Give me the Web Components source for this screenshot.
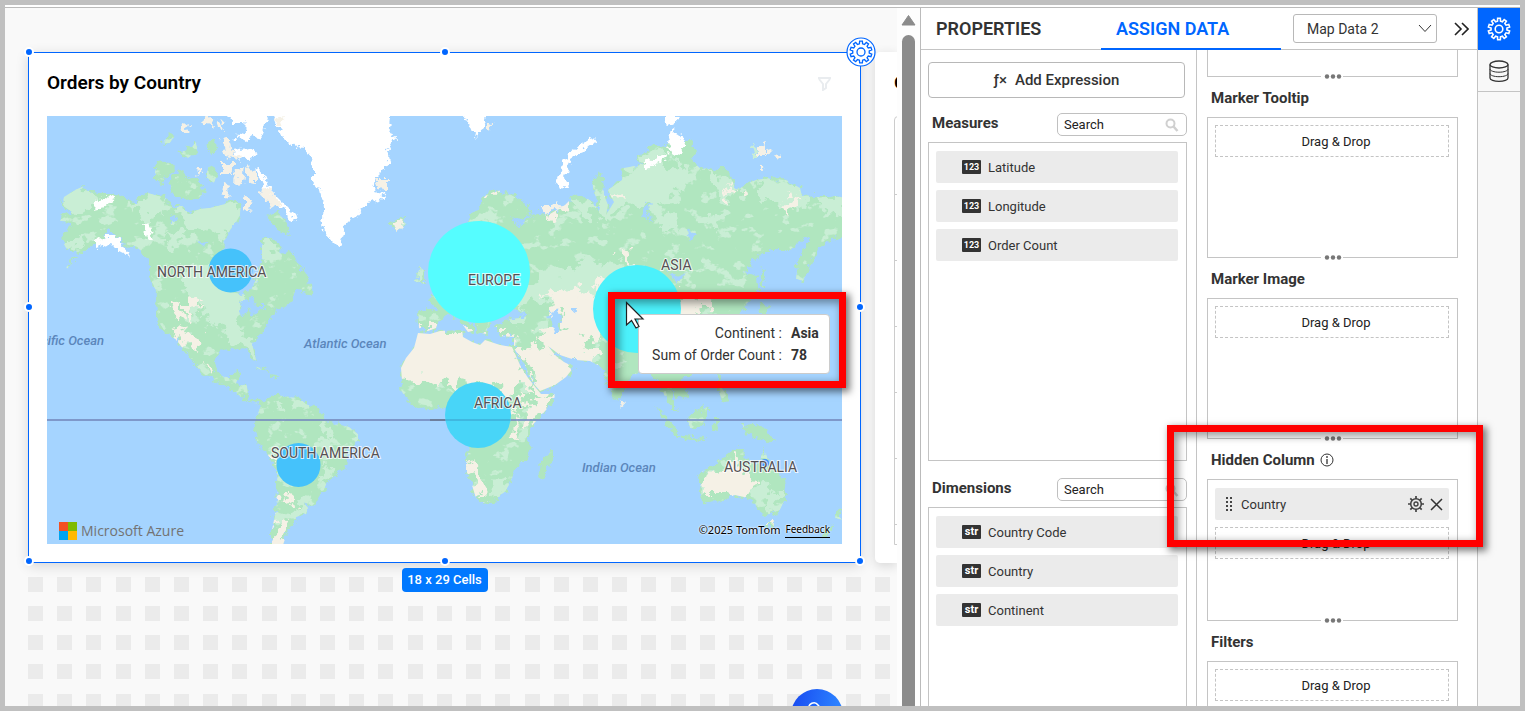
<!DOCTYPE html>
<html lang="en">
<head>
<meta charset="utf-8">
<title>Dashboard Designer</title>
<style>
  body { margin: 0; font-family: Roboto, "Liberation Sans", sans-serif; color: #333; }
</style>
</head>
<body>
<dash-app></dash-app>

<script>
const BASE = `*{box-sizing:border-box} button,input,select{font:inherit;color:inherit;margin:0} button{padding:0;border:0;background:none;cursor:pointer}`;

function gearPath(cx, cy, teeth, outer, inner) {
  const step = Math.PI * 2 / teeth;
  let d = '';
  for (let i = 0; i < teeth; i++) {
    const a = i * step - Math.PI / 2;
    [[-.30, inner], [-.20, outer], [.20, outer], [.30, inner]].forEach(([k, r], j) => {
      const x = cx + Math.cos(a + k * step) * r, y = cy + Math.sin(a + k * step) * r;
      d += (i || j ? 'L' : 'M') + x.toFixed(2) + ' ' + y.toFixed(2);
    });
  }
  return d + 'Z';
}

function define(name, html, setup) {
  const tpl = document.createElement('template');
  tpl.innerHTML = html;
  customElements.define(name, class extends HTMLElement {
    connectedCallback() {
      if (this.shadowRoot) return;
      const root = this.attachShadow({ mode: 'open' });
      root.append(tpl.content.cloneNode(true));
      if (setup) setup(this, root);
    }
  });
}

/* world map with bubbles */
define('world-map', `
<style>${BASE}
  :host{display:block;position:relative;height:428px;background:#a5d4ff}
  svg.map{display:block;width:100%;height:100%}
  .c{font:400 14px Roboto,sans-serif;fill:#555053;stroke:#fff;stroke-opacity:.75;stroke-width:2px;paint-order:stroke}
  .o{font:italic 500 13px Roboto,sans-serif;fill:#5b86bb}
  .logo,.legal{position:absolute;bottom:4px;display:flex;align-items:center}
  .logo{left:12px;gap:4px;font:500 14px/18px "Open Sans","Noto Sans",sans-serif;color:#737373}
  .legal{right:12px;bottom:6px;gap:5px;font:11px/16px "Noto Sans","Open Sans",sans-serif;color:#000;text-shadow:0 0 2px #fff,0 0 2px #fff}
  .legal a{color:#000;text-decoration:none;border-bottom:1px solid #000;font-size:10px}
</style>
<svg class="map" viewBox="47 116 795 428" preserveAspectRatio="xMidYMid slice" role="img" aria-label="World map">
  <defs>
    <filter id="coast" x="47" y="100" width="795" height="460" filterUnits="userSpaceOnUse">
      <feTurbulence type="fractalNoise" baseFrequency=".16" numOctaves="3" seed="4" result="n"/>
      <feDisplacementMap in="SourceGraphic" in2="n" scale="11" xChannelSelector="R" yChannelSelector="G"/>
    </filter>
    <filter id="patch" x="47" y="100" width="795" height="460" filterUnits="userSpaceOnUse">
      <feTurbulence type="fractalNoise" baseFrequency=".07" numOctaves="4" seed="9" result="n"/>
      <feDisplacementMap in="SourceGraphic" in2="n" scale="34" xChannelSelector="R" yChannelSelector="G"/>
    </filter>
    <filter id="speck" x="47" y="100" width="795" height="460" filterUnits="userSpaceOnUse" color-interpolation-filters="sRGB">
      <feTurbulence type="fractalNoise" baseFrequency=".06 .08" numOctaves="4" seed="21"/>
      <feColorMatrix values="0 0 0 0 .788  0 0 0 0 .933  0 0 0 0 .835  14 0 0 0 -8.4"/>
      <feComposite operator="in" in2="SourceAlpha"/>
    </filter>
    <clipPath id="landclip"><use href="#land"/></clipPath>
  </defs>
  <rect x="40" y="110" width="810" height="440" fill="#a5d4ff"/>
  <g filter="url(#coast)">
    <path id="land" fill="#b0e6bf" d="M62 205L64 197 75 190 82 187 92 192 100 193 115 195 125 196 133 203 140 197 148 193 158 196 165 197 172 206 182 206 190 213 200 209 210 208 218 206 225 204 233 200 241 206 240 215 236 222 230 230 226 238 222 250 212 264 214 282 230 292 242 294 250 289 256 280 262 262 262 238 270 238 278 243 282 254 291 250 296 258 298 266 306 272 310 280 306 288 296 293 290 303 278 310 272 316 266 324 265 331 258 338 252 344 254 352 256 360 252 359 248 349 240 348 232 349 222 350 217 355 215 362 217 370 222 376 230 377 233 371 240 370 238 378 236 384 247 385 248 393 245 398 250 401 258 399 264 401 262 405 252 403 243 400 238 394 230 389 220 383 210 379 201 374 197 366 190 358 184 350 178 342 172 336 165 332 160 324 157 314 156 300 157 293 152 283 150 270 147 260 140 250 133 245 127 246 118 237 108 230 100 240 92 246 80 255 67 269 66 267 75 258 84 252 76 252 66 248 61 238 70 228 72 222 60 221 62 214 72 212Z
      M256 418L262 402 268 395 277 394 290 397 300 398 306 404 318 408 323 416 326 422 335 424 348 426 358 434 358 440 350 448 348 458 344 471 338 474 328 480 324 490 318 500 312 506 304 502 308 508 306 514 296 517 294 524 288 530 286 536 282 548 272 548 272 530 276 510 277 485 277 470 268 455 258 445 254 431Z
      M418 333L430 334 440 331 462 330 463 337 472 342 480 345 485 340 500 345 512 347 520 365 528 378 536 388 541 394 555 394 554 400 546 410 537 420 528 430 528 440 531 450 528 458 520 463 514 471 512 480 505 492 496 500 482 503 476 498 472 485 466 470 466 458 470 448 466 440 462 430 456 422 450 410 440 406 430 408 420 409 412 404 404 396 400 388 402 380 401 368 406 358 414 348Z
      M418 310L438 311 432 304 428 296 440 290 455 280 466 268 474 264 482 268 500 262 500 250 488 252 480 262 472 258 466 240 468 222 478 205 485 196 498 190 508 193 520 200 530 208 532 216 520 219 512 216 518 226 530 218 536 213 550 214 565 205 572 198 580 195 590 200 600 210 594 192 592 182 598 172 603 177 604 195 608 205 606 215 614 202 608 190 622 180 624 168 640 165 638 155 650 148 665 145 674 140 690 140 697 150 692 160 700 168 715 170 725 168 730 176 736 190 744 184 756 180 770 178 786 180 800 188 802 196 815 195 830 195 846 198 846 235 835 238 825 245 818 247 812 264 803 281 796 279 797 262 805 246 812 240 806 236 790 250 765 250 755 258 745 272 757 276 758 290 750 300 742 310 741 322 735 318 726 316 735 328 745 342 742 352 735 362 722 369 705 373 690 374 680 382 688 392 684 400 676 396 672 392 672 402 678 412 672 410 666 400 660 384 652 374 640 370 632 378 622 386 622 394 617 401 612 394 605 376 600 366 590 361 575 360 560 355 548 346 556 356 564 362 574 367 566 377 555 385 540 391 534 384 524 365 514 348 514 337 500 336 496 326 504 320 520 318 524 314 512 306 504 308 498 316 490 320 486 334 478 332 474 318 464 312 470 322 476 330 468 332 458 318 446 316 438 322 436 328 428 331 419 328Z
      M698 478L700 472 712 467 718 460 728 455 737 448 746 449 744 458 754 465 760 460 764 446 768 460 776 470 784 480 787 495 780 510 770 515 760 512 752 500 744 497 735 495 722 502 710 504 702 503 701 490Z
      M155 166L160 160 172 164 175 168 168 176 162 184 155 180Z M172 174L180 170 186 178 195 176 200 185 207 192 198 198 186 200 173 195 170 186Z M161 144L168 135 174 137 170 143Z M178 152L186 150 196 142 198 152 188 158Z M207 144L214 140 216 150 210 154Z M207 168L214 164 218 174 214 183 207 178Z
      M268 216L278 212 286 222 290 234 280 232 272 224Z M305 289L310 282 316 294 306 296Z M416 281L417 272 421 268 424 276 424 284Z M552 448L552 458 548 470 542 480 538 477 541 462Z
      M656 408L662 412 668 420 680 434 678 438 668 428Z M680 435L692 437 706 438 704 441 682 439Z M687 418L700 410 707 406 707 418 702 428 690 428Z M714 418L720 418 716 424 718 432 712 430Z M718 374L723 376 722 388 730 400 722 402 718 388Z M742 424L755 425 765 430 776 441 768 441 758 438 746 434Z M837 507L842 512 842 520 835 518Z M834 524L830 532 822 538 824 531Z M762 266L765 276 764 290 760 286Z M768 522L774 522 772 528 768 527Z M760 304L770 306 764 314 758 312Z M390 221L403 217 406 224 398 230 390 229Z M254 366L264 369 270 373 264 372Z M272 374L280 376 272 378Z"/>
  </g>
  <g clip-path="url(#landclip)">
    <use href="#land" filter="url(#speck)"/>
    <g fill="#c9eed5" filter="url(#patch)">
      <path d="M175 210L240 195 240 230 215 238 188 225Z M195 262L218 270 240 294 238 318 225 330 205 322 195 300 180 280Z M60 195L90 185 100 200 75 215Z M66 236L84 244 74 256 62 246Z M130 205L160 196 166 210 140 222Z M160 230L185 232 180 250 168 246Z M262 236L282 242 276 258 266 256Z M225 324L240 320 238 340 228 344Z M250 340L258 344 256 362 250 356Z"/>
      <path d="M290 505L304 498 312 508 304 518 292 516Z M272 410L288 402 284 412Z M320 470L332 466 330 474 322 478Z M320 432L334 424 330 440Z M490 485L508 478 504 488 492 492Z"/>
      <path d="M538 272L600 262 640 270 650 290 560 300 530 300Z M606 178L645 160 690 170 685 190 655 210 620 205 600 220Z M650 205L672 210 676 230 660 226Z M570 198L598 205 590 225 574 215Z M700 168L740 185 730 200 716 186Z M755 176L810 184 806 208 780 206 760 196Z M820 196L848 194 846 220 826 216Z M716 215L726 208 722 238 714 230Z M480 312L520 306 516 322 490 322Z M505 285L540 284 545 300 510 306Z M760 485L784 490 774 508 764 512Z M700 484L708 490 706 504Z"/>
    </g>
    <g fill="#f5f1e6" filter="url(#patch)">
      <path d="M394 330L512 330 520 366 534 388 512 388 500 382 470 388 440 380 394 382Z M516 348L548 342 556 354 578 366 560 384 542 394Z M536 330L575 328 590 350 596 362 566 362 548 344Z M545 296L600 290 625 310 620 336 580 340 560 320Z M640 298L700 292 710 312 670 320 640 316Z M530 395L562 392 545 412 525 424Z M465 458L476 468 488 494 478 504Z M512 402L520 430 514 438Z"/>
      <path d="M702 475L735 462 752 478 760 492 745 502 722 492 704 492Z M170 304L184 302 186 318 174 320Z M172 330L190 326 206 346 196 352 180 340Z M190 296L200 300 196 318 190 314Z M272 522L284 516 290 528 286 548 270 548Z M262 440L270 456 276 466 264 456Z M284 490L292 500 286 504Z M205 364L212 366 210 374Z M545 205L562 200 566 212 552 216Z M610 250L632 258 628 266Z M612 192L624 190 622 202Z M728 186L738 190 734 202Z M780 204L800 194 792 216Z M484 194L500 188 494 200Z M584 300L600 280 606 296Z"/>
    </g>
    <g fill="#a5d4ff" filter="url(#coast)">
      <path d="M549 312L558 308 562 318 558 326 562 332 554 332 550 322Z M570 308L576 308 574 314Z M500 312L512 307 526 312 524 318 506 318Z M240 302L252 298 256 306 266 306 254 316 248 310 242 316Z M668 272L680 276 688 272 676 282Z M196 242L208 240 204 246Z M170 216L178 218 172 222Z M640 215L648 202 650 220Z M488 230L496 226 494 262 486 258Z M688 230L696 234 690 240Z"/>
    </g>
  </g>
  <g fill="#fff" filter="url(#coast)">
    <path d="M272 112L276 122 282 136 290 144 302 147 308 154 313 166 313 182 320 192 323 204 322 218 325 232 332 242 338 248 342 237 347 222 356 217 364 208 368 203 380 200 385 193 374 190 376 176 384 168 390 160 387 150 394 138 390 128 392 112Z"/>
    <path d="M228 112L270 112 265 124 262 138 252 136 244 142 236 138 248 128 242 122 232 122Z M232 150L250 148 258 154 248 159 234 158Z M256 168L264 174 270 190 284 204 294 214 296 222 288 216 278 206 266 198 262 184Z"/>
    <path d="M464 112L486 112 482 128 477 139 472 132Z M560 188L556 180 562 165 568 155 580 145 592 137 596 142 585 149 572 158 567 168 565 178 570 189Z M664 114L678 114 677 122 668 126Z M672 130L680 134 685 148 674 156 668 147Z M642 163L668 152 666 158 648 169Z M96 202L106 197 116 199 104 207 94 209Z M143 224L150 226 153 240 146 238Z M98 240L104 236 116 236 126 248 130 256 118 250 110 244 98 248Z"/>
  </g>
  <g fill="#f5f1e6" filter="url(#coast)">
    <path d="M274 118L286 116 280 126Z M203 117L212 116 214 126 206 124Z M216 118L222 122 224 130 218 128Z M181 126L190 124 188 132 182 132Z M222 137L230 142 232 154 242 156 238 160 226 156Z M222 164L234 164 232 174 222 174Z M236 170L244 166 242 186 234 184Z M246 168L256 170 256 184 248 182Z M222 182L230 184 228 198 220 194Z M264 186L276 196 282 208 270 204 260 192Z M244 196L252 200 250 212 244 208Z M196 168L202 168 198 178Z M376 180L388 180 388 190 378 188Z M394 222L404 220 400 230 392 228Z M487 122L493 124 492 132 487 130Z M758 148L764 144 764 156 758 156Z M766 148L772 152 766 154Z M774 154L782 156 778 160Z M760 164L766 168 760 170Z M620 400L625 404 622 408Z M768 522L774 522 772 526Z M540 206L552 206 558 200 562 206 546 214Z"/>
  </g>
  <g fill="#c9eed5" filter="url(#coast)"><path d="M752 148L757 144 758 156 753 156Z M416 281L418 272 422 268 421 282Z M640 156L662 148 666 152 642 164Z"/></g>
  <path d="M47 420H842" stroke="#7488bd" stroke-opacity=".8" stroke-width="2"/>
  <path d="M430 420H456" stroke="#6d7f9d" stroke-width="2"/>
  <g>
    <circle cx="230.500" cy="270.500" r="22" fill="#45c2fb"/>
    <circle cx="298.500" cy="465" r="22" fill="#45c2fb"/>
    <circle cx="479" cy="272" r="51" fill="#55fdff"/>
    <circle cx="478" cy="415" r="33" fill="#48d5f8"/>
    <circle cx="637" cy="309" r="44" fill="#4cf1fb"/>
    <circle cx="765" cy="463" r="4" fill="#4596fb"/>
    <path d="M446 420H510" stroke="#40b8e0" stroke-width="2"/>
  </g>
  <g class="c">
    <text x="157" y="277">NORTH AMERICA</text><text x="468" y="285">EUROPE</text><text x="661" y="270">ASIA</text>
    <text x="474" y="408">AFRICA</text><text x="271" y="458">SOUTH AMERICA</text><text x="724" y="472">AUSTRALIA</text>
  </g>
  <g class="o">
    <text x="104" y="345" text-anchor="end">Pacific Ocean</text><text x="304" y="348">Atlantic Ocean</text><text x="582" y="472">Indian Ocean</text>
  </g>
</svg>
<div class="logo">
  <svg width="18" height="18" viewBox="0 0 18 18"><path fill="#f25022" d="M0 0h9v9H0z"/><path fill="#7fba00" d="M9 0h9v9H9z"/><path fill="#00a4ef" d="M0 9h9v9H0z"/><path fill="#ffb900" d="M9 9h9v9H9z"/></svg>
  <span>Microsoft Azure</span>
</div>
<div class="legal"><span>©2025 TomTom</span><a href="#feedback">Feedback</a></div>
<slot></slot>`);

/* tooltip over the map, with the pointer */
define('map-tooltip', `
<style>${BASE}
  :host{position:absolute;right:12px;top:198px;width:192px;height:60px;background:#fff;border:1px solid #ccc;border-radius:4px;padding:7px 0 0 9px;font-size:14px;line-height:22px}
  dl{margin:0;display:grid;grid-template-columns:134px 1fr;column-gap:9px}
  dt{text-align:right} dd{margin:0;font-weight:700}
  svg{position:absolute;left:-14px;top:-14px}
</style>
<dl><dt>Continent :</dt><dd>Asia</dd><dt>Sum of Order Count :</dt><dd>78</dd></dl>
<svg width="20" height="30" viewBox="0 0 20 30"><path d="M1.500 1.500V24l5-4.500 4.500 7.500 3-1.500-4-7.500h8z" fill="#fff" stroke="#222" stroke-width="1.200"/></svg>`);

define('callout-box', `
<style>
  :host{position:absolute;z-index:5;border:7px solid #f00;box-shadow:3px 3px 7px 1px rgba(0,0,0,.5),inset 3px 3px 8px 1px rgba(0,0,0,.4);pointer-events:none;box-sizing:border-box}
</style>`);

/* selected dashboard widget */
define('widget-card', `
<style>${BASE}
  :host{display:block;position:relative;flex:1;min-width:0;background:#fff;border:1px solid #06f;padding:0 18px 18px;box-shadow:0 3px 12px rgba(0,0,0,.14)}
  header{height:63px;display:flex;align-items:center;justify-content:space-between;padding:0 10px 3px 0}
  h2{margin:0;font-size:19px;line-height:24px;font-weight:600;color:#000}
  i{position:absolute;width:10px;height:10px;margin-top:-1px;border-radius:50%;border:2px solid #fff;background:#06f;transform:translate(-50%,-50%)}
  .gear{position:absolute;right:-16px;top:-16px;width:30px;height:30px}
  output{position:absolute;left:50%;top:calc(100% + 6px);transform:translateX(-50%);background:#0078ff;color:#fff;border-radius:4px;width:86px;font-size:13px;line-height:24px;font-weight:500;text-align:center;white-space:nowrap}
</style>
<header><h2><slot name="title"></slot></h2>
<svg width="15" height="15" viewBox="0 0 15 15" fill="none" stroke="#e9ecef" stroke-width="2"><path d="M1 2h13M2 3l4 5v6l3-2V8l4-5"/></svg></header>
<slot></slot>
<i style="left:0;top:0"></i><i style="left:50%;top:0"></i><i style="left:0;top:50%"></i><i style="left:100%;top:50%"></i>
<i style="left:0;top:100%"></i><i style="left:50%;top:100%"></i><i style="left:100%;top:100%"></i>
<button class="gear" aria-label="Widget settings"><svg width="30" height="30" viewBox="0 0 30 30" fill="none" stroke="#06f"><circle cx="15" cy="15" r="14" fill="#fff" stroke-width="1.200"/><path d="${gearPath(15, 15, 10, 11, 8.3)}" stroke-width="1.300"/><circle cx="15" cy="15" r="4" stroke-width="1.300"/></svg></button>
<output>18 x 29 Cells</output>`);

/* neighbouring widget, cut by the canvas edge */
define('table-card', `
<style>${BASE}
  :host{display:block;flex:0 0 22px;background:#fff;border-radius:5px 0 0 5px;padding:0 0 18px 19px;overflow:hidden;box-shadow:0 3px 12px rgba(0,0,0,.14)}
  h2{margin:0;height:64px;font-size:19px;line-height:61px;font-weight:600;color:#000;white-space:nowrap}
  .rows{width:200px;height:429px;border:1px solid #ccc;border-radius:4px 0 0 0;display:grid;grid-template-rows:78px repeat(5,66px) 1fr}
  .rows div{border-bottom:1px solid #ccc}
</style>
<h2>Orders</h2><div class="rows"><div></div><div></div><div></div><div></div><div></div><div></div></div>`);

/* grid of empty cells behind the widgets */
define('cell-grid', `
<style>:host{position:absolute;inset:43px 0 0 23px;overflow:hidden} svg{display:block;width:100%;height:100%}</style>
<svg shape-rendering="crispEdges" fill="#ebebeb"></svg>`, (host, root) => {
  const pitch = 847 / 29;
  let s = '';
  for (let r = 18; r < 60; r++) for (let c = 0; c < 90; c++)
    s += `<rect x="${Math.round(c * pitch)}" y="${Math.round(r * pitch)}" width="15" height="15"/>`;
  root.querySelector('svg').innerHTML = s;
});

define('design-canvas', `
<style>${BASE}
  :host{display:block;position:relative;flex:1;min-width:0;background:#f9f9f9;overflow:hidden}
  .row{position:relative;display:flex;align-items:stretch;gap:14px;padding:44px 0 0 23px}
  .fab{position:absolute;left:786px;bottom:-35px;width:52px;height:52px;border-radius:50%;background:linear-gradient(100deg,#1748f0,#2b80ff 80%)}
  .fab svg{display:block}
</style>
<cell-grid></cell-grid>
<div class="row"><slot></slot></div>
<button class="fab" aria-label="Assistant"><svg width="52" height="52" viewBox="0 0 52 52" fill="none" stroke="#fff" stroke-width="1.500"><path d="M18 20a5 5 0 0 1 9-4l5 6"/></svg></button>`);

define('canvas-scrollbar', `
<style>:host{display:flex;flex-direction:column;flex:0 0 23px;background:#fdfdfd;padding:6px 4px 0;gap:9px;align-items:center}
  svg{flex:none} div{flex:1;width:13px;border-radius:7px 7px 0 0;background:#8b8b8b}</style>
<svg width="15" height="12" viewBox="0 0 15 12"><path d="M7.500 1.500L14 11H1z" fill="#8b8b8b" stroke="#8b8b8b" stroke-linejoin="round"/></svg><div></div>`);

define('field-chip', `
<style>:host{display:flex;align-items:center;height:32px;padding-left:26px;gap:7px;background:#ebebeb;border-radius:2px;font-size:13px}
  b{width:19px;height:14px;background:#333;color:#fff;border-radius:1px;font-size:9px;line-height:14px;text-align:center}
  b.str{font-size:11px;line-height:13px}</style>
<b></b><span><slot></slot></span>`, (host, root) => {
  const b = root.querySelector('b');
  b.textContent = host.getAttribute('type');
  b.className = b.textContent;
});

define('field-list', `
<style>${BASE}
  :host{display:flex;flex-direction:column}
  .head{display:flex;align-items:flex-start;justify-content:space-between;height:23px;margin-bottom:6px;padding-left:4px}
  label{font-size:15px;font-weight:700;line-height:20px}
  .search{position:relative;width:130px;height:23px}
  input{display:block;width:100%;height:23px;border:1px solid #c0c0c0;border-radius:5px;padding:0 26px 0 6px;background:#fff;font-size:13px;outline:0}
  input::placeholder{color:#222;opacity:1}
  .search svg{position:absolute;right:8px;top:5px}
  .box{flex:1;border:1px solid #c4c4c4;padding:8px 8px 0 7px;display:flex;flex-direction:column;gap:7px}
</style>
<div class="head"><label for="q"></label><div class="search"><input id="q" type="text" placeholder="Search">
<svg width="14" height="14" viewBox="0 0 14 14" fill="none" stroke="#d0d0d0" stroke-width="2"><circle cx="5.500" cy="5.500" r="4"/><path d="M8.500 8.500l4 4.500" stroke-width="2.500"/></svg></div></div>
<div class="box"><slot></slot></div>`, (host, root) => {
  root.querySelector('label').textContent = host.getAttribute('heading');
});

define('drop-well', `
<style>${BASE}
  :host{display:block}
  h3{margin:0;height:40px;padding:2px 0 0 4px;display:flex;align-items:center;gap:5px;font-size:15px;font-weight:700}
  .box{position:relative;height:141px;border:1px solid #c4c4c4;padding:7px 8px 0 7px}
  :host([filled]) .box{height:142px;padding-top:8px}
  :host([cut]) h3,:host([cut]) .drop{display:none}
  :host([cut]) .box{height:27px;border-top:0}
  .drop{height:32px;border:1px dashed #c4c4c4;display:flex;align-items:center;justify-content:center;padding-left:8px;font-size:13px;color:#222}
  .grip{position:absolute;left:50%;bottom:-6px;width:22px;height:11px;margin-left:-12px;background:#fff;display:flex}
  .info{display:none} :host([info]) .info{display:block}
</style>
<h3><span></span><svg class="info" width="14" height="14" viewBox="0 0 14 14" fill="none" stroke="#333"><circle cx="7" cy="7" r="6"/><path d="M7 6v5M7 3v2" stroke-width="1.300"/></svg></h3>
<div class="box"><slot></slot><div class="drop">Drag &amp; Drop</div>
<button class="grip" aria-label="Resize"><svg width="22" height="11" viewBox="0 0 22 11" fill="#777"><circle cx="6" cy="5.500" r="2.200"/><circle cx="12" cy="5.500" r="2.200"/><circle cx="18" cy="5.500" r="2.200"/></svg></button></div>`, (host, root) => {
  root.querySelector('h3 span').textContent = host.getAttribute('heading') || '';
});

define('assigned-field', `
<style>${BASE}
  :host{display:flex;align-items:center;height:32px;margin-bottom:7px;background:#ebebeb;border-radius:2px;padding:0 6px 0 10px;font-size:13px}
  span{flex:1;padding-left:8px} button{display:flex;margin-left:6px}
</style>
<svg width="8" height="14" viewBox="0 0 8 14" fill="#444"><path d="M1 0h2v2H1zM5 0h2v2H5zM1 4h2v2H1zM5 4h2v2H5zM1 8h2v2H1zM5 8h2v2H5zM1 12h2v2H1zM5 12h2v2H5z"/></svg>
<span><slot></slot></span>
<button aria-label="Field settings"><svg width="16" height="16" viewBox="0 0 16 16" fill="none" stroke="#444"><circle cx="8" cy="8" r="5.300" stroke-width="1.600"/><path d="M8 0v3M8 13v3M0 8h3M13 8h3M2.300 2.300l2 2M11.700 11.700l2 2M13.700 2.300l-2 2M4.300 11.700l-2 2" stroke-width="1.700"/><circle cx="8" cy="8" r="2" stroke-width="1.400"/></svg></button>
<button aria-label="Remove field"><svg width="13" height="13" viewBox="0 0 13 13" stroke="#333" stroke-width="1.500"><path d="M1 1l11 11M12 1L1 12"/></svg></button>`);

define('data-panel', `
<style>${BASE}
  :host{flex:0 0 557px;display:flex;flex-direction:column;background:#fff;border-left:1px solid #bbb;min-height:0}
  header{flex:none;height:42px;display:flex;align-items:center;border-bottom:1px solid #c4c4c4}
  .tab{align-self:stretch;width:180px;height:42px;text-align:left;padding:0 0 2px 15px;font-size:18px;font-weight:600;white-space:nowrap}
  .tab.on{color:#06f;border-bottom:2px solid #06f;padding-bottom:0}
  .pick{position:relative;width:144px;margin:0 17px 0 12px}
  select{display:block;appearance:none;width:100%;height:29px;border:1px solid #b8b8b8;border-radius:3px;background:#fff;padding:0 28px 0 13px;font-size:14px;outline:0}
  .pick svg{position:absolute;right:5px;top:10px;pointer-events:none}
  .go{display:flex}
  .cols{flex:1;min-height:0;overflow:hidden;display:grid;grid-template-columns:275px 1fr;grid-template-rows:100%}
  .left{border-right:1px solid #c4c4c4;width:276px;padding:12px 9px 0 7px;display:flex;flex-direction:column;min-height:0}
  .add{flex:none;height:36px;margin:0 2px 15px 0;border:1px solid #b8b8b8;border-radius:4px;font-size:15px;font-weight:500;display:flex;align-items:center;justify-content:center;gap:8px}
  .m{height:348px;margin-bottom:17px;flex:none} .d{flex:1 0 260px}
  .right{padding:0 19px 0 11px;overflow:hidden;min-height:0}
</style>
<header><button class="tab">PROPERTIES</button><button class="tab on">ASSIGN DATA</button>
<div class="pick"><select aria-label="Data source"><option>Map Data 2</option></select><svg width="14" height="9" viewBox="0 0 14 9" fill="none" stroke="#333"><path d="M1 1l6 6.500L13 1"/></svg></div>
<button class="go" aria-label="Collapse panel"><svg width="15" height="14" viewBox="0 0 15 14" fill="none" stroke="#222" stroke-width="1.600"><path d="M1 1l6 6-6 6M8 1l6 6-6 6"/></svg></button></header>
<div class="cols">
  <div class="left">
    <button class="add"><span>ƒ×</span><span>Add Expression</span></button>
    <field-list class="m" heading="Measures"><field-chip type="123">Latitude</field-chip><field-chip type="123">Longitude</field-chip><field-chip type="123">Order Count</field-chip></field-list>
    <field-list class="d" heading="Dimensions"><field-chip type="str">Country Code</field-chip><field-chip type="str">Country</field-chip><field-chip type="str">Continent</field-chip></field-list>
  </div>
  <div class="right">
    <drop-well cut></drop-well>
    <drop-well heading="Marker Tooltip"></drop-well>
    <drop-well heading="Marker Image"></drop-well>
    <drop-well heading="Hidden Column" info filled><assigned-field>Country</assigned-field></drop-well>
    <drop-well heading="Filters"></drop-well>
  </div>
</div>`);

define('side-rail', `
<style>${BASE}
  :host{flex:0 0 43px;background:#f8f8f8;border-left:1px solid #c4c4c4;display:flex;flex-direction:column}
  button{height:42px;display:flex;align-items:center;justify-content:center;border-bottom:1px solid #c4c4c4}
  .on{background:#06f;border-color:#06f}
</style>
<button class="on" aria-label="Settings"><svg width="24" height="24" viewBox="0 0 24 24" fill="none" stroke="#fff" stroke-width="1.600"><path d="${gearPath(12, 12, 10, 10.8, 8)}"/><circle cx="12" cy="12" r="3.800"/></svg></button>
<button aria-label="Data sources"><svg width="20" height="22" viewBox="0 0 20 22" fill="none" stroke="#333" stroke-width="1.300"><ellipse cx="10" cy="4.500" rx="9" ry="3.500"/><path d="M1 4.500v13.500c0 1.800 4 3.300 9 3.300s9-1.500 9-3.300V4.500"/><path d="M1 9c0 1.800 4 3.200 9 3.200S19 10.800 19 9M1 13.500c0 1.800 4 3.200 9 3.200s9-1.400 9-3.200" stroke-width="1"/></svg></button>`);

define('dash-app', `
<style>${BASE}
  :host{display:block;position:relative;height:100vh;min-height:400px;box-sizing:border-box;border:5px solid #c0c0c0;padding-top:2px;background:#fff;overflow:hidden}
  main{display:flex;height:100%;border-top:1px solid #bbb}
  .on-tip{right:-4px;bottom:156px;width:238px;height:96px}
  .on-field{right:37px;top:420px;width:316px;height:122px}
</style>
<main>
  <design-canvas>
    <widget-card><span slot="title">Orders by Country</span>
      <world-map><map-tooltip></map-tooltip><callout-box class="on-tip"></callout-box></world-map>
    </widget-card>
    <table-card></table-card>
  </design-canvas>
  <canvas-scrollbar></canvas-scrollbar>
  <data-panel></data-panel>
  <side-rail></side-rail>
</main>
<callout-box class="on-field"></callout-box>`);
</script>
</body>
</html>
